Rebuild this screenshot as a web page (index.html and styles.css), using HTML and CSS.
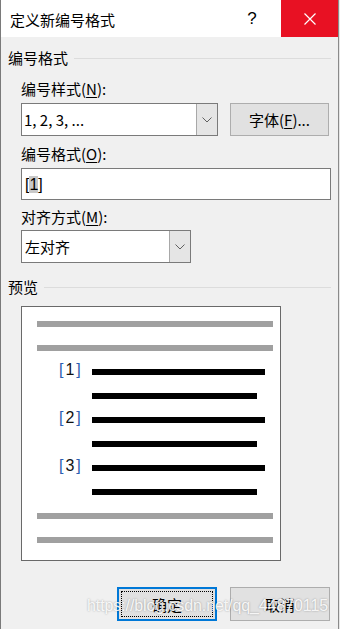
FILE: index.html
```html
<!DOCTYPE html>
<html lang="zh-CN">
<head>
  <meta charset="UTF-8">
  <title>定义新编号格式</title>
  <link rel="stylesheet" href="styles.css">
</head>
<body>
  <div class="window">
    <div class="titlebar">
      <span class="title">定义新编号格式</span>
      <span class="help">?</span>
      <span class="close">
        <svg width="12" height="12" viewBox="0 0 12 12"><path d="M0.5 0.5 L11.5 11.5 M11.5 0.5 L0.5 11.5" stroke="#fff" stroke-width="1.2" fill="none"/></svg>
      </span>
    </div>

    <div class="content">
      <div class="group-head"><span>编号格式</span><i class="rule"></i></div>

      <div class="field-label">编号样式(<u>N</u>):</div>
      <div class="row">
        <div class="combo combo-style">
          <span class="value">1, 2, 3, ...</span>
          <span class="drop"><svg width="10" height="6" viewBox="0 0 10 6"><polyline points="0.5,0.5 5,5 9.5,0.5" stroke="#606060" fill="none"/></svg></span>
        </div>
        <div class="btn btn-font">字体(<u>F</u>)...</div>
      </div>

      <div class="field-label label-format">编号格式(<u>O</u>):</div>
      <div class="text-input"><span class="mono">[<span class="sel">1</span>]</span></div>

      <div class="field-label label-align">对齐方式(<u>M</u>):</div>
      <div class="combo combo-align">
        <span class="value">左对齐</span>
        <span class="drop"><svg width="10" height="6" viewBox="0 0 10 6"><polyline points="0.5,0.5 5,5 9.5,0.5" stroke="#606060" fill="none"/></svg></span>
      </div>

      <div class="group-head group-preview"><span>预览</span><i class="rule"></i></div>

      <div class="preview">
        <div class="bar gray"></div>
        <div class="bar gray"></div>
        <div class="item"><span class="num">[<b>1</b>]</span><div class="bar black long"></div></div>
        <div class="item"><span class="num"></span><div class="bar black short"></div></div>
        <div class="item"><span class="num">[<b>2</b>]</span><div class="bar black long"></div></div>
        <div class="item"><span class="num"></span><div class="bar black short"></div></div>
        <div class="item"><span class="num">[<b>3</b>]</span><div class="bar black long"></div></div>
        <div class="item"><span class="num"></span><div class="bar black short"></div></div>
        <div class="bar gray"></div>
        <div class="bar gray"></div>
      </div>

      <div class="buttons">
        <div class="btn btn-ok"><span class="focus">确定</span></div>
        <div class="btn btn-cancel">取消</div>
      </div>
    </div>

    <div class="watermark">https://blog.csdn.net/qq_44870115</div>
  </div>
</body>
</html>
```

FILE: styles.css
```css
body {
  margin: 0;
  background: #e6e6e6;
  font-family: "Noto Sans CJK SC", "Microsoft YaHei", sans-serif;
  font-size: 15px;
  color: #000;
}
.window {
  width: 337px; height: 629px; position: relative; overflow: hidden;
  background: #f0f0f0;
  border-left: 1px solid #7a7a7a; border-right: 1px solid #8a8a8a;
}

/* title bar */
.titlebar     { display: flex; align-items: center; height: 37px; background: #fff; }
.title        { flex: 1; padding-left: 9px; padding-top: 2px; line-height: 20px; }
.help         { width: 60px; text-align: center; font-family: "Liberation Sans", sans-serif;
                font-size: 17px; padding-top: 1px; margin-right: -1px; }
.close        { width: 57px; height: 37px; background: #e81123;
                display: flex; align-items: center; justify-content: center; }

/* body */
.content      { padding: 11px 7px 0 7px; }
.group-head   { display: flex; align-items: center; gap: 6px; height: 20px; line-height: 20px; }
.rule         { flex: 1; height: 1px; background: #dcdcdc; }
.group-preview { margin-top: 14px; }

.field-label  { margin: 11px 0 0 13px; height: 20px; line-height: 20px; }
.field-label u { text-decoration-thickness: 1px; text-underline-offset: 2px; }
.label-format { margin-top: 8px; }
.label-align  { margin-top: 7px; }

.row          { display: flex; gap: 12px; margin: 4px 0 0 13px; }

.combo        { display: flex; box-sizing: border-box; height: 33px; background: #fff;
                border: 1px solid #7a7a7a; }
.combo .value { flex: 1; padding-left: 2px; line-height: 31px; }
.combo .drop  { width: 20px; background: #e5e5e5; border-left: 1px solid #a8a8a8;
                display: flex; align-items: center; justify-content: center; }
.combo-style  { width: 197px; }
.combo-align  { width: 170px; margin: 3px 0 0 13px; }
.combo-align .value { padding-left: 3px; }

.btn          { box-sizing: border-box; width: 100px; height: 34px; background: #e1e1e1;
                border: 1px solid #adadad; display: flex; align-items: center; justify-content: center; }
.btn u        { text-decoration-thickness: 1px; text-underline-offset: 2px; }
.btn-font     { height: 33px; width: 99px; }

.text-input   { box-sizing: border-box; width: 310px; height: 32px; margin: 4px 0 0 13px;
                background: #fff; border: 1px solid #7a7a7a; padding-left: 3px; line-height: 29px; }
.mono         { font-family: "Liberation Sans", sans-serif; font-size: 16px; }
.sel          { background: #c8c8c8; }

/* preview */
.preview      { box-sizing: border-box; width: 260px; height: 255px; margin: 9px 0 0 13px;
                background: #fff; border: 1px solid #696969; padding-top: 14px;
                display: flex; flex-direction: column; gap: 18px; }
.bar          { height: 6px; }
.bar.gray     { background: #a0a0a0; width: 236px; margin-left: 15px; }
.bar.black    { background: #000; }
.bar.long     { width: 173px; }
.bar.short    { width: 165px; }
.item         { display: flex; align-items: center; height: 6px; padding-left: 37px; }
.num          { width: 33px; line-height: 6px; font-family: "Liberation Sans", sans-serif;
                font-size: 16px; color: #2a5db0; letter-spacing: 2px; margin-top: -5px; }
.num b        { font-weight: normal; color: #111; }

/* buttons */
.buttons      { display: flex; justify-content: flex-end; gap: 13px; margin: 26px 1px 0 0; }
.btn-ok       { border: 2px solid #0078d7; padding: 2px; }
.btn-ok .focus { flex: 1; align-self: stretch; display: flex; align-items: center; justify-content: center;
                 border: 1px dotted #000; }

.watermark    { position: absolute; left: 86px; top: 597px; font-family: "Liberation Sans", sans-serif;
                font-size: 16px; letter-spacing: -0.1px; color: rgba(255,255,255,0.9);
                text-shadow: 0 0 2px rgba(0,0,0,0.35); pointer-events: none; }
```
